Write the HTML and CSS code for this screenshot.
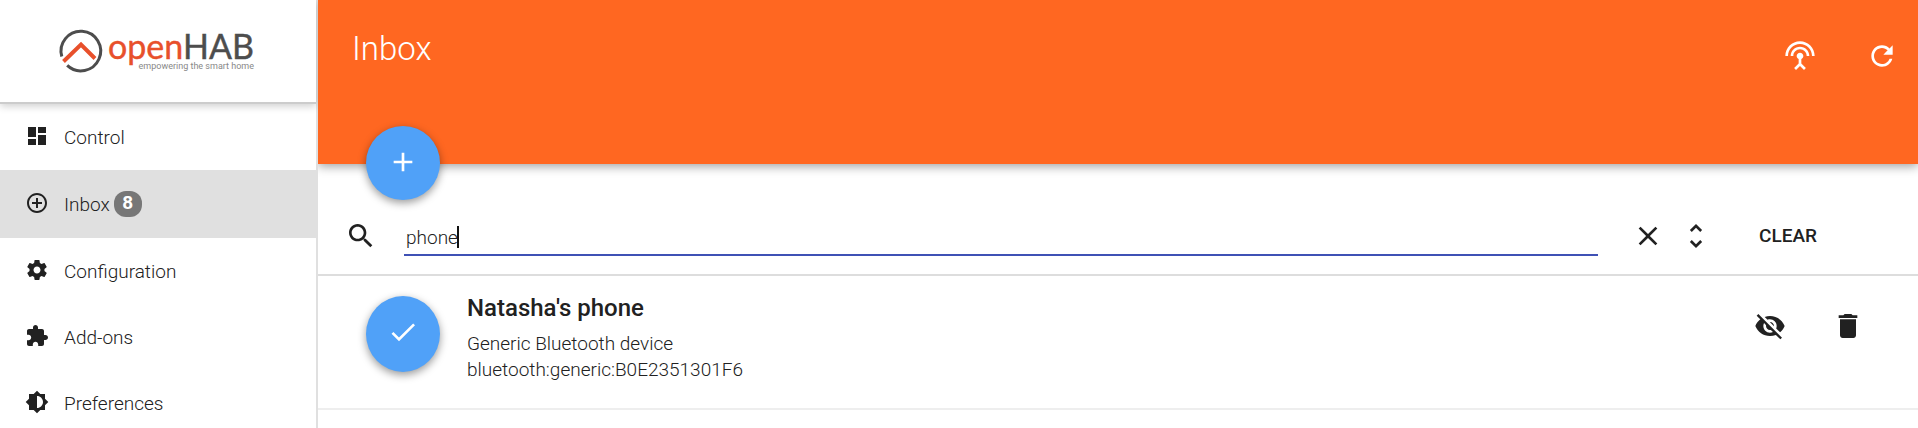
FILE: index.html
```html
<!DOCTYPE html>
<html lang="en">
<head>
<meta charset="utf-8">
<title>Inbox - openHAB</title>
<link rel="stylesheet" href="styles.css">
</head>
<body>
<div class="app">
  <aside class="sidebar">
    <div class="brand">
      <svg class="logo" viewBox="0 0 198 46" role="img" aria-label="openHAB">
        <path class="logo-ring" d="M3.800 28.500A19.800 19.800 0 1 1 9.200 37.400"/>
        <path class="logo-roof" d="M5.500 33.500L23 16.500L37 30.500"/>
        <text class="logo-name" x="50" y="31"><tspan class="logo-open">open</tspan>HAB</text>
        <text class="logo-tag" x="196" y="41">empowering the smart home</text>
      </svg>
    </div>
    <nav class="menu">
      <a class="menu-item" href="#control">
        <svg class="menu-icon" viewBox="0 0 24 24"><path d="M3 13h8V3H3v10zm0 8h8v-6H3v6zm10 0h8V11h-8v10zm0-18v6h8V3h-8z"/></svg>
        <span>Control</span>
      </a>
      <a class="menu-item active" href="#inbox">
        <svg class="menu-icon" viewBox="0 0 24 24"><path d="M13 7h-2v4H7v2h4v4h2v-4h4v-2h-4V7zm-1-5C6.480 2 2 6.480 2 12s4.480 10 10 10 10-4.480 10-10S17.520 2 12 2zm0 18c-4.410 0-8-3.590-8-8s3.590-8 8-8 8 3.590 8 8-3.590 8-8 8z"/></svg>
        <span>Inbox</span>
        <span class="badge">8</span>
      </a>
      <a class="menu-item" href="#configuration">
        <svg class="menu-icon" viewBox="0 0 24 24"><path d="M19.430 12.980c.04-.32.07-.64.07-.98s-.03-.66-.07-.98l2.110-1.650c.19-.15.24-.42.12-.64l-2-3.460c-.12-.22-.39-.3-.61-.22l-2.490 1c-.52-.4-1.080-.73-1.690-.98l-.38-2.650C14.460 2.180 14.250 2 14 2h-4c-.25 0-.46.18-.49.42l-.38 2.650c-.61.25-1.170.59-1.690.98l-2.490-1c-.23-.09-.49 0-.61.22l-2 3.460c-.13.22-.07.49.12.64l2.110 1.650c-.04.32-.07.65-.07.98s.03.66.07.98l-2.110 1.650c-.19.15-.24.42-.12.64l2 3.460c.12.22.39.3.61.22l2.490-1c.52.4 1.080.73 1.690.98l.38 2.650c.03.24.24.42.49.42h4c.25 0 .46-.18.49-.42l.38-2.650c.61-.25 1.170-.59 1.690-.98l2.490 1c.23.09.49 0 .61-.22l2-3.460c.12-.22.07-.49-.12-.64l-2.110-1.650zM12 15.500c-1.930 0-3.500-1.570-3.500-3.500s1.570-3.500 3.500-3.500 3.500 1.570 3.500 3.500-1.570 3.500-3.500 3.500z"/></svg>
        <span>Configuration</span>
      </a>
      <a class="menu-item" href="#addons">
        <svg class="menu-icon" viewBox="0 0 24 24"><path d="M20.500 11H19V7c0-1.100-.9-2-2-2h-4V3.500C13 2.120 11.880 1 10.500 1S8 2.120 8 3.500V5H4c-1.100 0-1.990.9-1.990 2v3.800H3.500c1.490 0 2.700 1.210 2.700 2.700s-1.210 2.700-2.700 2.700H2V20c0 1.100.9 2 2 2h3.800v-1.500c0-1.490 1.210-2.700 2.700-2.700 1.490 0 2.700 1.210 2.700 2.700V22H17c1.100 0 2-.9 2-2v-4h1.500c1.380 0 2.500-1.120 2.500-2.500S21.880 11 20.500 11z"/></svg>
        <span>Add-ons</span>
      </a>
      <a class="menu-item" href="#preferences">
        <svg class="menu-icon" viewBox="0 0 24 24"><path d="M20 15.310L23.310 12 20 8.690V4h-4.690L12 .69 8.690 4H4v4.690L.69 12 4 15.310V20h4.690L12 23.310 15.310 20H20v-4.690zM12 18V6c3.310 0 6 2.690 6 6s-2.690 6-6 6z"/></svg>
        <span>Preferences</span>
      </a>
    </nav>
  </aside>
  <main class="main">
    <header class="header">
      <h1 class="title">Inbox</h1>
      <div class="header-actions">
        <button class="icon-button" type="button" aria-label="Discover things">
          <svg class="icon" viewBox="0 0 24 24"><path d="M12 5c-3.870 0-7 3.130-7 7h2c0-2.760 2.240-5 5-5s5 2.240 5 5h2c0-3.870-3.130-7-7-7zm1 9.290c.88-.39 1.500-1.260 1.500-2.290 0-1.380-1.120-2.500-2.500-2.500S9.500 10.620 9.500 12c0 1.020.62 1.900 1.500 2.290v3.300L7.590 21 9 22.410l3-3 3 3L16.410 21 13 17.590v-3.300zM12 1C5.930 1 1 5.930 1 12h2c0-4.970 4.030-9 9-9s9 4.030 9 9h2c0-6.070-4.930-11-11-11z"/></svg>
        </button>
        <button class="icon-button" type="button" aria-label="Refresh">
          <svg class="icon" viewBox="0 0 24 24"><path d="M17.650 6.350C16.200 4.900 14.210 4 12 4c-4.420 0-7.990 3.580-7.990 8s3.570 8 7.990 8c3.730 0 6.840-2.550 7.730-6h-2.080c-.82 2.330-3.040 4-5.650 4-3.310 0-6-2.690-6-6s2.690-6 6-6c1.660 0 3.140.69 4.220 1.780L13 11h7V4l-2.350 2.350z"/></svg>
        </button>
      </div>
      <button class="fab fab-add" type="button" aria-label="Add thing">
        <svg class="icon" viewBox="0 0 24 24"><path d="M19 13h-6v6h-2v-6H5v-2h6V5h2v6h6v2z"/></svg>
      </button>
    </header>
    <form class="search">
      <label class="search-label" for="query" aria-label="Search">
        <svg class="icon" viewBox="0 0 24 24"><path d="M15.500 14h-.79l-.28-.27C15.410 12.590 16 11.110 16 9.500 16 5.910 13.090 3 9.500 3S3 5.910 3 9.500 5.910 16 9.500 16c1.610 0 3.090-.59 4.230-1.570l.27.28v.79l5 4.990L20.490 19l-4.990-5zm-6 0C7.010 14 5 11.990 5 9.500S7.010 5 9.500 5 14 7.010 14 9.500 11.990 14 9.500 14z"/></svg>
      </label>
      <div class="search-field">
        <input class="search-input" id="query" type="text" value="phone">
        <span class="caret"></span>
      </div>
      <div class="search-actions">
        <button class="icon-button" type="reset" aria-label="Clear search">
          <svg class="icon" viewBox="0 0 24 24"><path d="M19 6.410L17.590 5 12 10.590 6.410 5 5 6.410 10.590 12 5 17.590 6.410 19 12 13.410 17.590 19 19 17.590 13.410 12z"/></svg>
        </button>
        <button class="icon-button" type="button" aria-label="Expand filters">
          <svg class="icon" viewBox="0 0 24 24"><path d="M12 5.830L15.170 9l1.410-1.410L12 3 7.410 7.590 8.830 9 12 5.830zm0 12.340L8.830 15l-1.410 1.410L12 21l4.590-4.590L15.170 15 12 18.170z"/></svg>
        </button>
        <button class="clear-button" type="button">CLEAR</button>
      </div>
    </form>
    <ul class="results">
      <li class="result">
        <button class="fab" type="button" aria-label="Add Natasha's phone">
          <svg class="icon" viewBox="0 0 24 24"><path d="M9 16.200L4.800 12l-1.400 1.400L9 19 21 7l-1.400-1.400L9 16.200z"/></svg>
        </button>
        <div class="result-text">
          <h2 class="result-name">Natasha's phone</h2>
          <p class="result-line">Generic Bluetooth device</p>
          <p class="result-line">bluetooth:generic:B0E2351301F6</p>
        </div>
        <div class="result-actions">
          <button class="icon-button" type="button" aria-label="Hide">
            <svg class="icon" viewBox="0 0 24 24"><path d="M12 7c2.760 0 5 2.240 5 5 0 .65-.13 1.260-.36 1.830l2.920 2.920c1.510-1.260 2.700-2.890 3.430-4.750-1.730-4.390-6-7.500-11-7.500-1.400 0-2.740.25-3.980.7l2.160 2.160C10.740 7.130 11.350 7 12 7zM2 4.270l2.280 2.280.46.46C3.080 8.300 1.780 10.020 1 12c1.730 4.390 6 7.500 11 7.500 1.550 0 3.030-.3 4.380-.84l.42.42L19.730 22 21 20.730 3.270 3 2 4.270zM7.530 9.800l1.550 1.550c-.05.21-.08.43-.08.65 0 1.660 1.340 3 3 3 .22 0 .44-.03.65-.08l1.550 1.550c-.67.33-1.410.53-2.200.53-2.760 0-5-2.240-5-5 0-.79.2-1.530.53-2.200zm4.310-.78l3.150 3.150.02-.16c0-1.660-1.340-3-3-3l-.17.01z"/></svg>
          </button>
          <button class="icon-button" type="button" aria-label="Delete">
            <svg class="icon" viewBox="0 0 24 24"><path d="M6 19c0 1.100.9 2 2 2h8c1.100 0 2-.9 2-2V7H6v12zM19 4h-3.500l-1-1h-5l-1 1H5v2h14V4z"/></svg>
          </button>
        </div>
      </li>
    </ul>
  </main>
</div>
</body>
</html>
```
FILE: styles.css
```css
* {
  box-sizing: border-box;
}

body {
  margin: 0;
  background: #fff;
  color: #212121;
  font-family: Roboto, "Liberation Sans", sans-serif;
  font-size: 19px;
  font-weight: 300;
  line-height: 26px;
}

button,
input {
  margin: 0;
  padding: 0;
  border: 0;
  background: none;
  color: inherit;
  font: inherit;
}

svg {
  display: block;
  fill: currentColor;
}

.app {
  display: flex;
  min-height: 100vh;
  max-height: 100vh;
  overflow: hidden;
}

.sidebar {
  flex: 0 0 318px;
  border-right: 2px solid #e0e0e0;
}

.brand {
  padding: 28px 58px;
  border-bottom: 2px solid #ccc;
  box-shadow: 0 2px 8px rgba(0, 0, 0, 0.2);
}

.logo {
  width: 198px;
  height: 46px;
  overflow: visible;
}

.logo-ring,
.logo-roof {
  fill: none;
  stroke: #4d4d4d;
  stroke-width: 3;
}

.logo-roof {
  stroke: #e8502b;
  stroke-width: 4;
}

.logo-name {
  fill: #4d4d4d;
  stroke: #4d4d4d;
  stroke-width: 0.4;
  font: 400 34px Lato, sans-serif;
}

.logo-open {
  fill: #e8502b;
  stroke: #e8502b;
}

.logo-tag {
  fill: #888;
  font: 400 9px Roboto, sans-serif;
  text-anchor: end;
}

.menu-item {
  display: flex;
  align-items: center;
  height: 66px;
  padding: 0 25px;
  color: inherit;
  text-decoration: none;
}

.menu-item.active {
  height: 68px;
  background: #e0e0e0;
}

.menu-item span {
  padding-top: 1px;
}

.menu-icon {
  width: 24px;
  height: 24px;
  margin: 0 15px 2px 0;
}

.menu-item .badge {
  min-width: 28px;
  margin-left: 4px;
  padding: 0 0 2px;
  border-radius: 12px;
  background: #777;
  color: #fff;
  font-weight: 700;
  line-height: 24px;
  text-align: center;
}

.main {
  flex: 1;
  min-width: 0;
}

.header {
  position: relative;
  display: flex;
  justify-content: space-between;
  height: 164px;
  padding: 28px 20px 0 34px;
  background: #ff6721;
  box-shadow: 0 2px 10px rgba(0, 0, 0, 0.4);
  clip-path: inset(0 0 -48px 0);
  color: #fff;
}

.title {
  margin: 0;
  font-size: 33px;
  font-weight: 300;
  line-height: 42px;
}

.header-actions {
  display: flex;
  align-items: flex-start;
  gap: 50px;
  padding-top: 12px;
}

.icon {
  width: 32px;
  height: 32px;
}

.fab {
  display: flex;
  flex: none;
  align-items: center;
  justify-content: center;
  width: 74px;
  height: 76px;
  padding-bottom: 4px;
  border-radius: 50%;
  background: #50a1f8;
  box-shadow: 0 3px 8px rgba(0, 0, 0, 0.4);
  color: #fff;
}

.fab-add {
  position: absolute;
  bottom: -36px;
  left: 48px;
  height: 74px;
  padding-bottom: 2px;
}

.search {
  display: flex;
  align-items: center;
  padding: 52px 101px 18px 27px;
  border-bottom: 2px solid #ddd;
}

.search-label {
  margin-right: 27px;
}

.search-field {
  position: relative;
  flex: 1;
}

.search-input {
  display: block;
  width: 100%;
  height: 40px;
  padding: 4px 2px 0;
  border-bottom: 2px solid #3f51b5;
  outline: 0;
}

.caret {
  position: absolute;
  top: 10px;
  left: 53px;
  width: 2px;
  height: 22px;
  background: #111;
}

.search-actions {
  display: flex;
  align-items: center;
  gap: 16px;
  margin-left: 34px;
}

.clear-button {
  margin-left: 31px;
  font-weight: 500;
}

.results {
  margin: 0;
  padding: 0;
  list-style: none;
}

.result {
  display: flex;
  align-items: flex-start;
  padding: 20px 54px 20px 48px;
  border-bottom: 2px solid #eee;
}

.result-text {
  flex: 1;
  min-height: 92px;
  margin-left: 27px;
}

.result-name {
  margin: 0 0 11px;
  font-size: 24px;
  font-weight: 500;
  line-height: 24px;
}

.result-line {
  margin: 0;
}

.result-actions {
  display: flex;
  gap: 46px;
  padding-top: 14px;
}
```
